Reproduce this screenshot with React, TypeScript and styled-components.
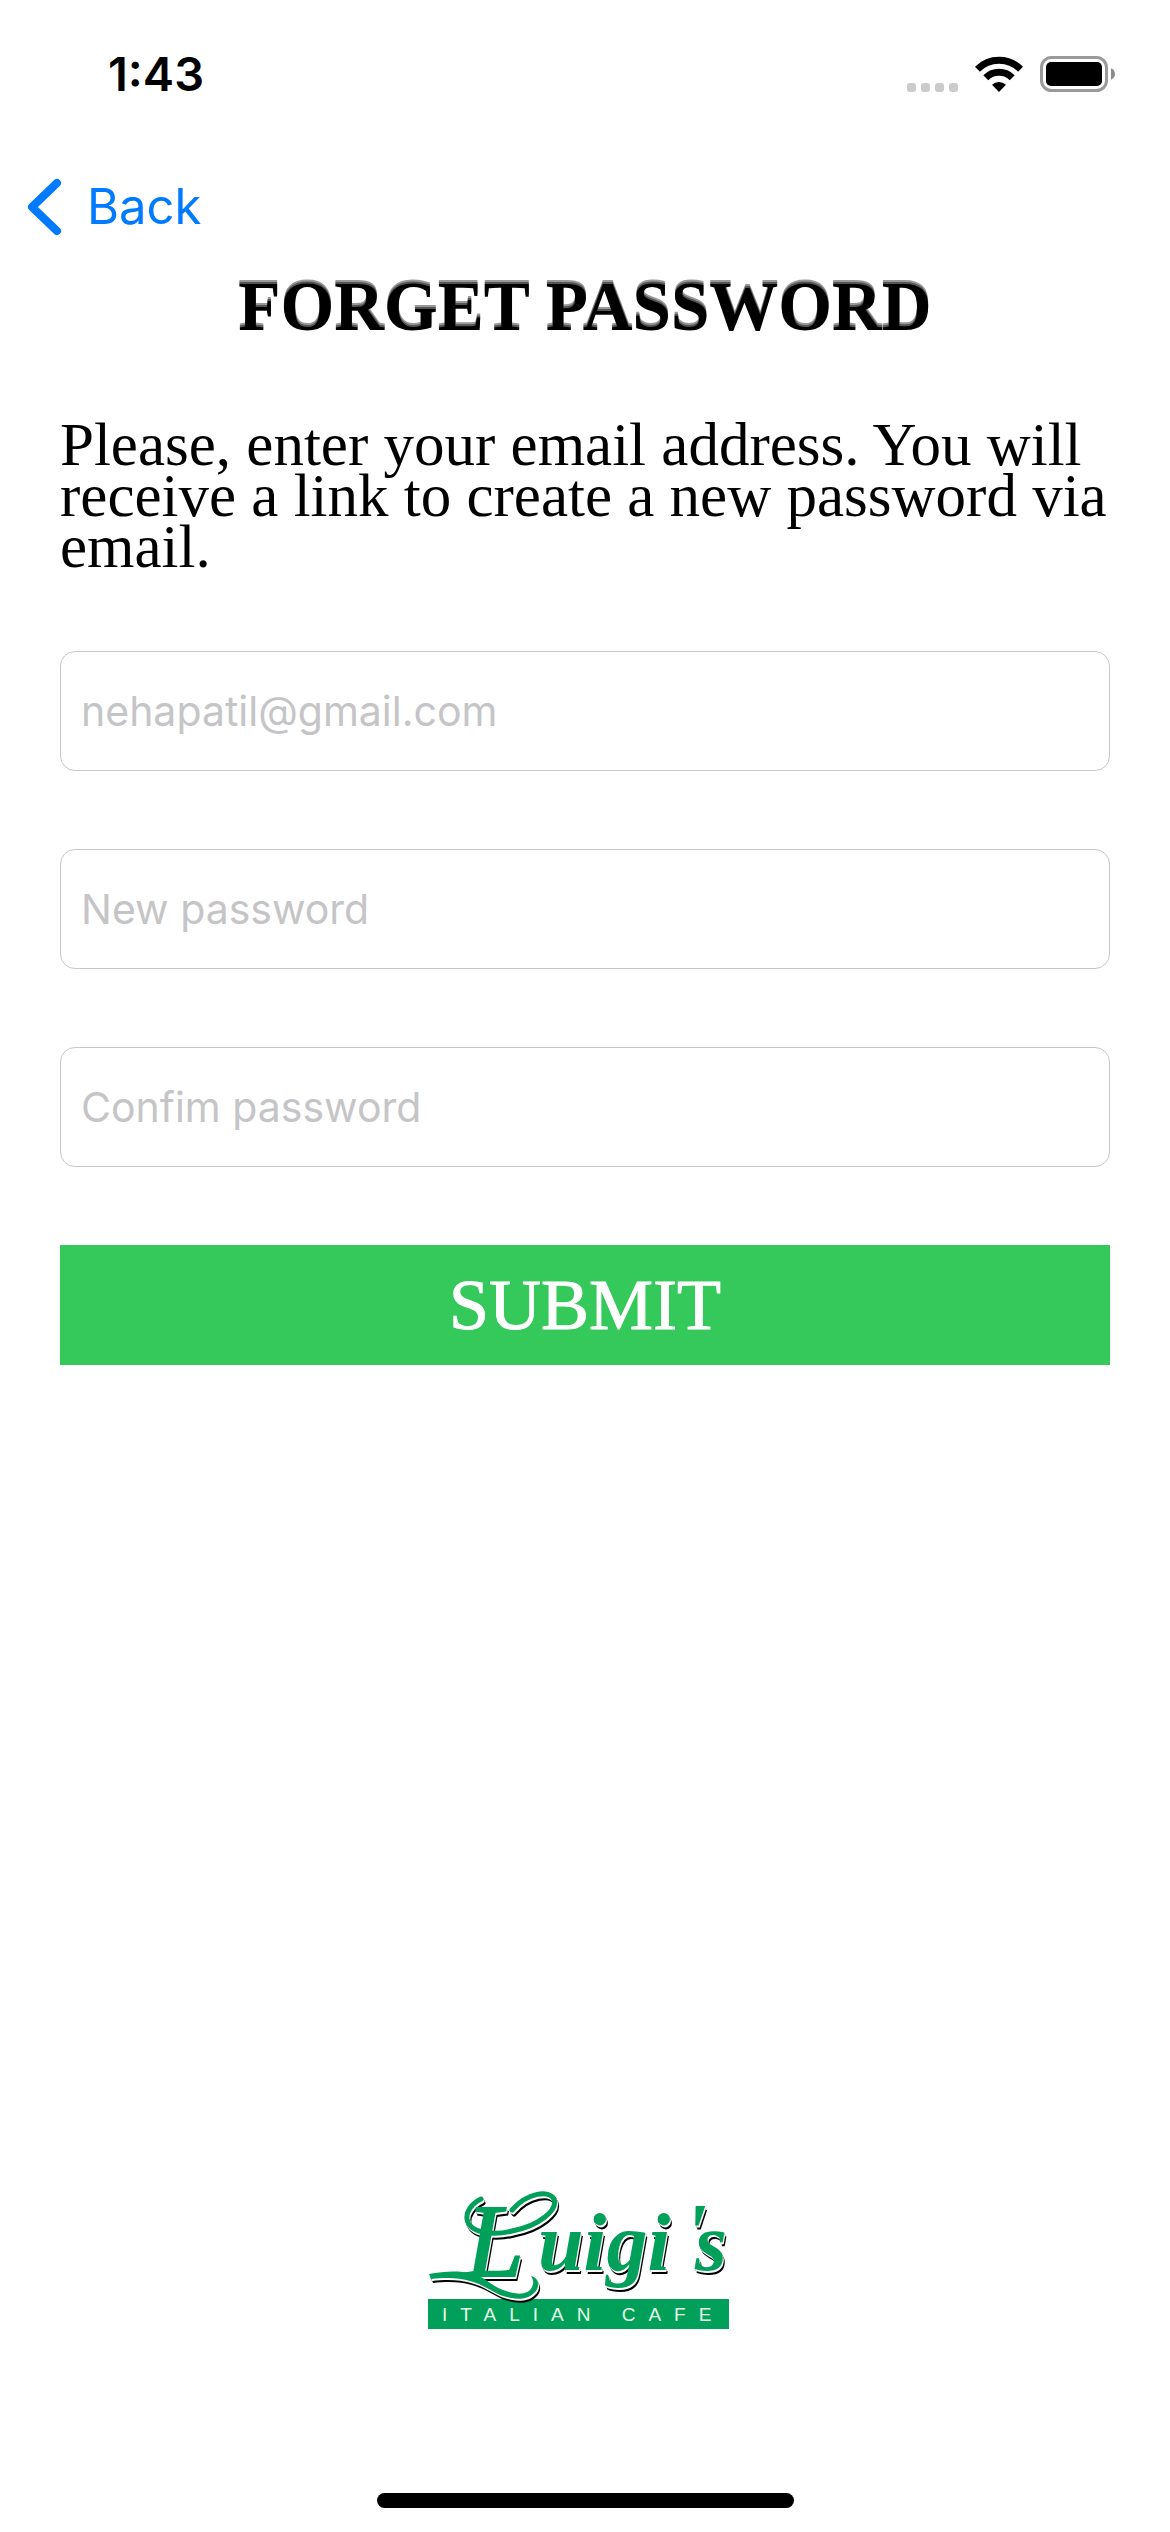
import React from 'react';
import styled, { createGlobalStyle } from 'styled-components';

const SANS = 'Inter, "Liberation Sans", sans-serif';
const SERIF = '"Liberation Serif", "Times New Roman", serif';

const GlobalStyle = createGlobalStyle`
  *, *::before, *::after { box-sizing: border-box; }
  body { margin: 0; background: #fff; color: #000; font-family: ${SANS}; }
`;

const Screen = styled.div`
  min-height: 100vh;
  display: flex;
  flex-direction: column;
  background: #fff;
`;

const StatusBar = styled.header`
  display: flex;
  align-items: center;
  justify-content: space-between;
  height: 148px;
  padding: 0 54px 0 108px;
`;

const Clock = styled.time`
  font-size: 47px;
  line-height: 56px;
  font-weight: 600;
`;

const StatusIcons = styled.div`
  display: flex;
  align-items: flex-end;
  gap: 17px;
`;

const NavBar = styled.nav`
  display: flex;
  align-items: center;
  height: 118px;
  padding: 0 26px;
`;

const BackButton = styled.button`
  display: flex;
  align-items: center;
  gap: 20px;
  padding: 0;
  border: 0;
  background: none;
  color: #007aff;
  font-family: ${SANS};
  font-size: 49px;
  line-height: 60px;
  cursor: pointer;
`;

const Main = styled.main`
  display: flex;
  flex-direction: column;
  padding: 0 60px;
`;

const Title = styled.h1`
  margin: 0;
  text-align: center;
  font-family: ${SERIF};
  font-size: 69px;
  line-height: 82px;
  font-weight: 700;
  text-shadow: 0 -2px 0 #555, 0 -4px 0 #999;
`;

const Intro = styled.p`
  margin: 71px 0 79px;
  font-family: ${SERIF};
  font-size: 61px;
  line-height: 51px;
`;

const Form = styled.form`
  display: flex;
  flex-direction: column;
  gap: 78px;
`;

const Field = styled.input`
  width: 100%;
  height: 120px;
  padding: 0 20px;
  border: 1px solid #c8c8ca;
  border-radius: 15px;
  background: #fff;
  color: #000;
  font-family: ${SANS};
  font-size: 41px;
  &::placeholder { color: #c5c5c7; opacity: 1; }
`;

const SubmitButton = styled.button`
  height: 120px;
  padding: 0;
  border: 0;
  background: #35c85a;
  color: #fff;
  font-family: ${SERIF};
  font-size: 72px;
  line-height: 80px;
  -webkit-text-stroke: 1px #fff;
  cursor: pointer;
`;

const Footer = styled.footer`
  display: flex;
  flex-direction: column;
  align-items: center;
  gap: 163px;
  margin-top: auto;
  padding-bottom: 24px;
`;

const HomeIndicator = styled.div`
  width: 417px;
  height: 15px;
  border-radius: 8px;
  background: #000;
`;

const LogoMark = styled.g`
  fill: #00a05a;
  filter: drop-shadow(1px 2px 0 #fff) drop-shadow(1px 2px 0 #000);
`;

const LogoScript = styled.text<{ $capital?: boolean }>`
  font-family: ${SERIF};
  font-size: ${(p) => (p.$capital ? 104 : 82)}px;
  font-style: italic;
  font-weight: ${(p) => (p.$capital ? 400 : 700)};
`;

const LogoCaption = styled.text`
  font-family: "Liberation Sans", sans-serif;
  font-size: 19px;
  letter-spacing: 13px;
  fill: #e9fbe9;
`;

const SignalDots = () => (
  <svg width="51" height="9" viewBox="0 0 51 9" fill="#cbcbcb" aria-hidden="true">
    {[0, 14, 28, 42].map((x) => (
      <rect key={x} x={x} width="9" height="9" rx="3" />
    ))}
  </svg>
);

const WifiIcon = () => (
  <svg width="48" height="36" viewBox="0 0 48 36" fill="none" stroke="#000" strokeWidth="7" aria-hidden="true">
    <path d="M2.4 13.2a30.5 30.5 0 0 1 43.2 0" />
    <path d="M10.8 21.8a18.7 18.7 0 0 1 26.4 0" />
    <path d="M24 36l-7-7.2a10.3 10.3 0 0 1 14 0z" fill="#000" stroke="none" />
  </svg>
);

const BatteryIcon = () => (
  <svg width="76" height="36" viewBox="0 0 76 36" aria-hidden="true">
    <rect x="1.5" y="1.5" width="65" height="33" rx="10" fill="none" stroke="#9a9a9a" strokeWidth="3" />
    <rect x="6" y="6" width="56" height="24" rx="5" />
    <path d="M71 12.3c5.3 2.4 5.3 9 0 11.4z" fill="#8a8a8a" />
  </svg>
);

const ChevronIcon = () => (
  <svg width="41" height="58" viewBox="0 0 41 58" fill="none" stroke="#007aff" strokeWidth="8" strokeLinecap="round" strokeLinejoin="round" aria-hidden="true">
    <path d="M31 5L6 29l25 24" />
  </svg>
);

const Logo = () => (
  <svg width="314" height="140" viewBox="0 0 314 140" role="img" aria-label="Luigi's Italian Cafe">
    <rect y="109" width="301" height="30" fill="#00a05a" />
    <LogoCaption x="14" y="131">ITALIAN CAFE</LogoCaption>
    <LogoMark>
      {/* curl and loop around the capital */}
      <path
        d="M53 9C43 14 38 22 39 29C41 43 65 46 84 41C111 36 130 20 126 9C121 0 100 2 84 20"
        fill="none"
        stroke="#00a05a"
        strokeWidth="5"
        strokeLinecap="round"
        strokeLinejoin="round"
      />
      {/* swash under the capital */}
      <path d="M1 84C22 80 45 80 58 90C73 102 98 110 104 97Q107 91 103 86C112 88 112 98 106 103C97 112 82 109 70 104C53 95 40 85 3 89Z" />
      <LogoScript $capital x="38" y="86" stroke="#00a05a" strokeWidth="2">L</LogoScript>
      <LogoScript x="110" y="80">uigi</LogoScript>
      <LogoScript x="256" y="70">'</LogoScript>
      <LogoScript x="267" y="80">s</LogoScript>
    </LogoMark>
  </svg>
);

const FIELDS = [
  { name: 'email', type: 'email', placeholder: 'nehapatil@gmail.com', label: 'Email' },
  { name: 'new-password', type: 'password', placeholder: 'New password', label: 'New password' },
  { name: 'confirm-password', type: 'password', placeholder: 'Confim password', label: 'Confirm password' },
];

export default function App() {
  return (
    <>
      <GlobalStyle />
      <Screen>
        <StatusBar>
          <Clock>1:43</Clock>
          <StatusIcons>
            <SignalDots />
            <WifiIcon />
            <BatteryIcon />
          </StatusIcons>
        </StatusBar>
        <NavBar>
          <BackButton type="button">
            <ChevronIcon />
            Back
          </BackButton>
        </NavBar>
        <Main>
          <Title>FORGET PASSWORD</Title>
          <Intro>
            Please, enter your email address. You will receive a link to create a new password via email.
          </Intro>
          <Form onSubmit={(e) => e.preventDefault()}>
            {FIELDS.map((f) => (
              <Field key={f.name} name={f.name} type={f.type} placeholder={f.placeholder} aria-label={f.label} />
            ))}
            <SubmitButton type="submit">SUBMIT</SubmitButton>
          </Form>
        </Main>
        <Footer>
          <Logo />
          <HomeIndicator />
        </Footer>
      </Screen>
    </>
  );
}
